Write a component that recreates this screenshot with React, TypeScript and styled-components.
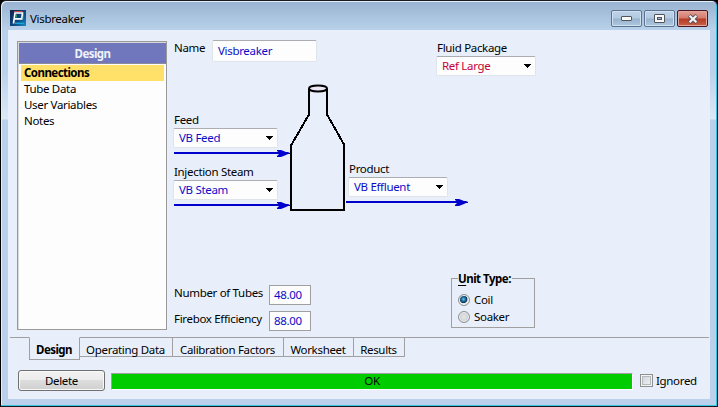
import React from "react";
import styled, { createGlobalStyle } from "styled-components";

const GlobalStyle = createGlobalStyle`
  html, body { margin: 0; padding: 0; background: #000; }
  * { box-sizing: border-box; }
  body { font-family: "Noto Sans", "Open Sans", sans-serif; font-size: 11.5px; letter-spacing: -0.32px; line-height: 16px; color: #000; }
`;

const Frame = styled.div`
  width: 718px;
  height: 407px;
  border: 1px solid #1a1a20;
  border-left: 1px solid #000;
  border-radius: 6px 6px 0 0;
  box-shadow: inset -1px -1px 0 #35c3e0, inset 1px 1px 0 #e4eef8;
  padding: 1px 7px 7px;
  display: flex;
  flex-direction: column;
  background: linear-gradient(#98b3d0 0, #b9d1ea 29px, #b9d1ea 70px, #dce9f6 118px, #b9d1ea 119px, #bbd0ea 100%);
`;

const TitleBar = styled.header`
  height: 28px;
  flex: none;
  display: flex;
  align-items: flex-start;
  padding: 8px 2px 0 2px;
`;

const Title = styled.h1`
  margin: 1px auto 0 4px;
  font-size: 11.5px;
  line-height: 16px;
  font-weight: 400;
`;

const WindowButtons = styled.div`
  display: flex;
  gap: 2px;
`;

const WindowButton = styled.button<{ $close?: boolean }>`
  width: 31px;
  height: 17px;
  padding: 0;
  display: flex;
  align-items: center;
  justify-content: center;
  border: 1px solid ${(p) => (p.$close ? "#4c1420" : "#5d7390")};
  border-radius: 2px;
  box-shadow: inset 0 0 0 1px ${(p) => (p.$close ? "#e3a69d" : "#cfe0f1")};
  background: ${(p) =>
    p.$close
      ? "linear-gradient(#e3a095 0, #d3796c 48%, #b63a22 52%, #c9604a 100%)"
      : "linear-gradient(#bfd3e8 0, #b2c9e1 48%, #98b2cd 52%, #afc8e0 100%)"};
`;

const Client = styled.main`
  flex: 1;
  background: #e8effa;
  display: flex;
  flex-direction: column;
`;

const Page = styled.section`
  height: 308px;
  flex: none;
  margin: 0 1px 0 2px;
  padding: 10px 0 0 7px;
  display: flex;
  border-bottom: 1px solid #a0a0a0;
`;

const Sidebar = styled.nav`
  width: 150px;
  height: 289px;
  margin-top: 1px;
  flex: none;
  background: #fdfdfd;
  border: 1px solid #9a9a9a;
  box-shadow: inset 1px 1px 0 #d8d8d8;
`;

const SidebarHead = styled.div`
  margin: 1px 0 1px 1px;
  height: 21px;
  background: #7177bc;
  border-bottom: 1px solid #8c8c98;
  color: #eef2fb;
  font-weight: 700;
  letter-spacing: -0.55px;
  line-height: 22px;
  text-align: center;
`;

const SidebarItem = styled.div<{ $active?: boolean }>`
  height: 16px;
  margin: 0 2px 0 3px;
  padding-left: 3px;
  background: ${(p) => (p.$active ? "#ffe069" : "transparent")};
  font-weight: ${(p) => (p.$active ? 700 : 400)};
  letter-spacing: ${(p) => (p.$active ? -0.55 : -0.32)}px;
`;

const Form = styled.div`
  flex: 1;
  padding-left: 6px;
  display: flex;
  flex-direction: column;
`;

const TopRow = styled.div`
  height: 44px;
  display: flex;
  padding-left: 1px;
`;

const NameLabel = styled.div`
  width: 38px;
`;

const NameInput = styled.div`
  width: 105px;
  height: 22px;
  padding: 2px 5px;
  background: #fdfdfd;
  border: 1px solid #dfe3ea;
  border-top-color: #abadb3;
  border-radius: 2px;
  color: #0c0cc8;
`;

const FluidGroup = styled.div`
  margin-left: 119px;
`;

const FieldLabel = styled.div`
  height: 16px;
  padding-left: 1px;
  white-space: nowrap;
`;

const SelectBox = styled.div<{ $width: number; $color?: string }>`
  width: ${(p) => p.$width}px;
  height: 20px;
  padding: 0 4px 0 5px;
  display: flex;
  align-items: center;
  justify-content: space-between;
  background: #fdfdfd;
  border: 1px solid #dfe3ea;
  border-top-color: #abadb3;
  border-radius: 2px;
  white-space: nowrap;
  color: ${(p) => p.$color ?? "#0c0cc8"};
`;

const Diagram = styled.div`
  height: 128px;
  display: flex;
`;

const Inlets = styled.div`
  width: 117px;
  padding-top: 28px;
`;

const Stream = styled.div`
  height: 52px;
  svg { display: block; }
`;

const Outlet = styled.div`
  padding-top: 77px;
  svg { display: block; }
`;

const OutletField = styled.div`
  padding-left: 2px;
`;

const BottomRow = styled.div`
  margin-top: 66px;
  display: flex;
  align-items: flex-start;
`;

const Numbers = styled.div`
  display: grid;
  grid-template-columns: 95px 42px;
  grid-auto-rows: 20px;
  row-gap: 6px;
  padding: 7px 0 0 1px;
`;

const NumberLabel = styled.div`
  line-height: 15px;
  white-space: nowrap;
`;

const NumberInput = styled.div`
  border: 1px solid #a0a0a0;
  background: #fdfdfd;
  color: #0c0cc8;
  padding-left: 4px;
  line-height: 18px;
`;

const UnitType = styled.fieldset`
  margin: -5px 0 0 140px;
  width: 84px;
  height: 55px;
  padding: 7px 0 0 6px;
  border: 1px solid #a0a0a0;
`;

const Legend = styled.legend`
  height: 11px;
  line-height: 11px;
  padding: 0 1px 0 0;
  font-weight: 700;
  letter-spacing: -0.5px;
  u { text-underline-offset: 2px; }
`;

const RadioRow = styled.label`
  height: 17px;
  display: flex;
  align-items: center;
  gap: 4px;
`;

const Radio = styled.span<{ $on?: boolean }>`
  width: 12px;
  height: 12px;
  border-radius: 50%;
  border: 1px solid #8e8f8f;
  box-shadow: inset 0 0 0 1px #f4f4f4;
  background: ${(p) =>
    p.$on
      ? "radial-gradient(circle at 45% 42%, #74cdee 0, #2278aa 22%, #0c3558 44%, #dfe6ea 54%)"
      : "radial-gradient(circle, #e8e8e8 0, #d2d4d6 50%, #c6c9cc 70%)"};
`;

const Tabs = styled.div`
  display: flex;
  align-items: flex-start;
  height: 32px;
  margin: -1px 0 0 21px;
`;

const Tab = styled.div<{ $width: number; $active?: boolean }>`
  width: ${(p) => p.$width}px;
  height: ${(p) => (p.$active ? 23 : 20)}px;
  padding-right: 1px;
  text-align: center;
  line-height: ${(p) => (p.$active ? 24 : 23)}px;
  background: #e8effa;
  border: 1px solid #a0a0a0;
  border-top-color: ${(p) => (p.$active ? "#e8effa" : "#a0a0a0")};
  border-left-width: ${(p) => (p.$active ? 1 : 0)}px;
  font-weight: ${(p) => (p.$active ? 700 : 400)};
  letter-spacing: ${(p) => (p.$active ? -0.55 : -0.32)}px;
`;

const StatusRow = styled.footer`
  display: flex;
  align-items: flex-start;
  padding: 1px 0 0 10px;
`;

const DeleteButton = styled.button`
  width: 87px;
  height: 21px;
  padding: 0;
  font: inherit;
  letter-spacing: inherit;
  color: #000;
  border: 1px solid #707070;
  border-radius: 3px;
  box-shadow: inset 0 0 0 1px #f8f8f8;
  background: linear-gradient(#f2f2f2 0, #ebebeb 49%, #dddddd 50%, #cfcfcf 100%);
`;

const StatusBar = styled.div`
  width: 522px;
  height: 17px;
  margin: 3px 7px 0 6px;
  border: 1px solid #a0a0a0;
  border-right-color: #fff;
  border-bottom-color: #fff;
  background: #00cc00;
  text-align: center;
  line-height: 14px;
`;

const CheckBox = styled.span`
  width: 13px;
  height: 13px;
  margin: 4px 3px 0 0;
  border: 1px solid #8e8f8f;
  box-shadow: inset 0 0 0 1px #f4f4f4, inset 0 0 0 2px #b4b9be;
  background: linear-gradient(135deg, #cbcfd5, #f6f6f6);
`;

const IgnoredLabel = styled.span`
  margin-top: 3px;
`;

function AppIcon() {
  return (
    <svg width="16" height="16" viewBox="0 0 16 16">
      <defs>
        <linearGradient id="icon" x1="0" y1="0" x2="1" y2="1">
          <stop offset="0" stopColor="#0b2450" />
          <stop offset="0.6" stopColor="#0d4a86" />
          <stop offset="1" stopColor="#1592c4" />
        </linearGradient>
      </defs>
      <rect width="16" height="16" fill="url(#icon)" />
      <path d="M4 1.6H12.5" stroke="#e8483c" strokeWidth="1" />
      <path d="M3.5 13.5L5 3H12.5L11.8 8.8H4.5" fill="none" stroke="#fff" strokeWidth="1.7" />
      <path d="M6.5 4.4V7.6M13.7 2.6L13 9" stroke="#2f9c68" strokeWidth="0.9" />
      <path d="M5 13.3H14" stroke="#18a6d8" strokeWidth="1.4" />
    </svg>
  );
}

function Caret() {
  return (
    <svg width="7" height="4" viewBox="0 0 7 4" shapeRendering="crispEdges">
      <path d="M0 0H7V1H6V2H5V3H4V4H3V3H2V2H1V1H0Z" fill="#000" />
    </svg>
  );
}

function Select({ value, width, color }: { value: string; width: number; color?: string }) {
  return (
    <SelectBox $width={width} $color={color}>
      <span>{value}</span>
      <Caret />
    </SelectBox>
  );
}

function Arrow({ length, start }: { length: number; start: number }) {
  const end = start + length;
  return (
    <svg width={end} height="10" viewBox={`0 0 ${end} 10`}>
      <path d={`M${start} 5H${end - 8}`} stroke="#0000cd" strokeWidth="2" />
      <path
        d={`M${end - 13} 2H${end - 9}L${end - 4} 4H${end - 2}L${end} 5V6H${end - 2}L${end - 4} 7L${end - 9} 9H${end - 13}V8L${end - 11} 6V4.6L${end - 13} 3Z`}
        fill="#0000cd"
      />
    </svg>
  );
}

function Furnace() {
  return (
    <svg width="56" height="128" viewBox="0 0 56 128" fill="none" stroke="#000" strokeWidth="2">
      <path d="M19 5V30.5L1 61.5V126H54V60.5L36.5 29.5V5" shapeRendering="crispEdges" />
      <ellipse cx="28" cy="4.5" rx="9" ry="3" fill="#efe6f5" />
    </svg>
  );
}

export default function App() {
  return (
    <>
      <GlobalStyle />
      <Frame>
        <TitleBar>
          <AppIcon />
          <Title>Visbreaker</Title>
          <WindowButtons>
            <WindowButton aria-label="Minimize">
              <svg width="11" height="5" viewBox="0 0 11 5">
                <rect x="0.5" y="0.5" width="10" height="4" rx="0.5" fill="#f8f8f8" stroke="#50545c" />
              </svg>
            </WindowButton>
            <WindowButton aria-label="Maximize">
              <svg width="11" height="9" viewBox="0 0 11 9">
                <rect x="0.5" y="0.5" width="10" height="8" rx="0.5" fill="#f8f8f8" stroke="#50545c" />
                <rect x="3.5" y="3.5" width="4" height="2" fill="#9db5cf" stroke="#50545c" />
              </svg>
            </WindowButton>
            <WindowButton $close aria-label="Close">
              <svg width="12" height="10" viewBox="0 0 12 10">
                <path d="M2.3 1.5L9.7 8.5M9.7 1.5L2.3 8.5" stroke="#55505c" strokeWidth="4" />
                <path d="M2.6 1.7L9.4 8.3M9.4 1.7L2.6 8.3" stroke="#f4f4f6" strokeWidth="2.2" />
              </svg>
            </WindowButton>
          </WindowButtons>
        </TitleBar>
        <Client>
          <Page>
            <Sidebar>
              <SidebarHead>Design</SidebarHead>
              <SidebarItem $active>Connections</SidebarItem>
              <SidebarItem>Tube Data</SidebarItem>
              <SidebarItem>User Variables</SidebarItem>
              <SidebarItem>Notes</SidebarItem>
            </Sidebar>
            <Form>
              <TopRow>
                <NameLabel>Name</NameLabel>
                <NameInput>Visbreaker</NameInput>
                <FluidGroup>
                  <FieldLabel>Fluid Package</FieldLabel>
                  <Select value="Ref Large" width={100} color="#c8003c" />
                </FluidGroup>
              </TopRow>
              <Diagram>
                <Inlets>
                  <Stream>
                    <FieldLabel>Feed</FieldLabel>
                    <Select value="VB Feed" width={105} />
                    <Arrow start={1} length={116} />
                  </Stream>
                  <Stream>
                    <FieldLabel>Injection Steam</FieldLabel>
                    <Select value="VB Steam" width={105} />
                    <Arrow start={1} length={116} />
                  </Stream>
                </Inlets>
                <Furnace />
                <Outlet>
                  <OutletField>
                    <FieldLabel>Product</FieldLabel>
                    <Select value="VB Effluent" width={100} />
                  </OutletField>
                  <Arrow start={0} length={122} />
                </Outlet>
              </Diagram>
              <BottomRow>
                <Numbers>
                  <NumberLabel>Number of Tubes</NumberLabel>
                  <NumberInput>48.00</NumberInput>
                  <NumberLabel>Firebox Efficiency</NumberLabel>
                  <NumberInput>88.00</NumberInput>
                </Numbers>
                <UnitType>
                  <Legend><u>U</u>nit Type:</Legend>
                  <RadioRow><Radio $on />Coil</RadioRow>
                  <RadioRow><Radio />Soaker</RadioRow>
                </UnitType>
              </BottomRow>
            </Form>
          </Page>
          <Tabs>
            <Tab $width={51} $active>Design</Tab>
            <Tab $width={93}>Operating Data</Tab>
            <Tab $width={111}>Calibration Factors</Tab>
            <Tab $width={70}>Worksheet</Tab>
            <Tab $width={51}>Results</Tab>
          </Tabs>
          <StatusRow>
            <DeleteButton>Delete</DeleteButton>
            <StatusBar>OK</StatusBar>
            <CheckBox />
            <IgnoredLabel>Ignored</IgnoredLabel>
          </StatusRow>
        </Client>
      </Frame>
    </>
  );
}
